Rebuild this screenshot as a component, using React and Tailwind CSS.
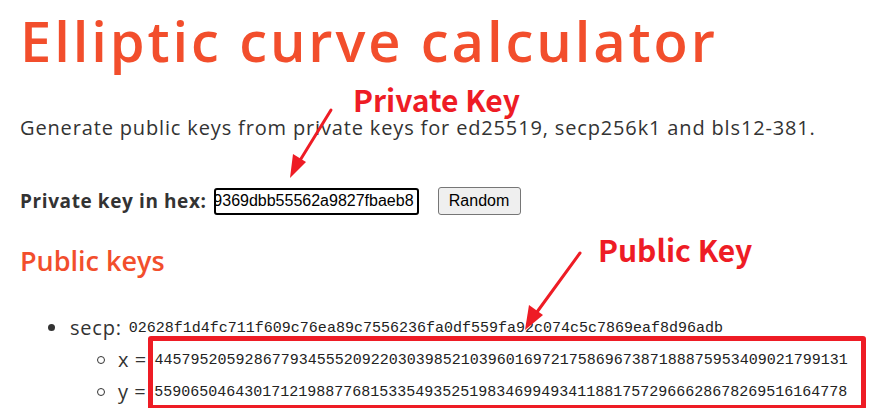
export default function App() {
  const sans = { fontFamily: '"Open Sans", Lato, sans-serif' };
  const mono = { fontFamily: '"Liberation Mono", monospace' };
  const arial = { fontFamily: '"Liberation Sans", Arial, sans-serif' };
  return (
    <div className="relative w-[877px] h-[408px] overflow-hidden bg-white text-[#333]" style={sans}>
      <div className="pl-[20px] pt-[4px]">
        <h1 className="text-[56px] leading-[72px] font-semibold text-[#f24e2c] tracking-[2.9px]">Elliptic curve calculator</h1>
        <p className="mt-[38px] text-[20px] leading-[28px] text-[#333] tracking-[0.85px]">
          Generate public keys from private keys for ed25519, secp256k1 and bls12-381.
        </p>
        <div className="mt-[45px] flex items-center">
          <span className="text-[19px] font-bold text-[#333] tracking-[0.6px]">Private key in hex:</span>
          <div className="ml-[7px] w-[205px] h-[27px] border-2 border-black rounded-[3px] overflow-hidden flex items-center justify-end pr-[3px]">
            <span className="whitespace-nowrap text-[16px] text-black" style={arial}>
              a8f2c1e4d7b0f9369dbb55562a9827fbaeb8
            </span>
          </div>
          <button className="ml-[19px] w-[83px] h-[28px] bg-[#efefef] border border-[#767676] rounded-[3px] text-[16px] text-black" style={arial}>
            Random
          </button>
        </div>
        <h2 className="mt-[27px] text-[27px] leading-[36px] font-semibold text-[#f24e2c]">Public keys</h2>
        <ul className="mt-[33px] ml-[28px]">
          <li className="flex items-center h-[32px]">
            <span className="w-[7px] h-[7px] rounded-full bg-[#333] mr-[15px]"></span>
            <span className="text-[20px] tracking-[0.8px]">secp:</span>
            <span className="ml-[7px] mt-[3px] text-[15px] text-[#222]" style={mono}>
              02628f1d4fc711f609c76ea89c7556236fa0df559fa92c074c5c7869eaf8d96adb
            </span>
          </li>
          <li className="ml-[49px] flex items-center h-[32px]">
            <span className="w-[8px] h-[8px] rounded-full border border-[#333] mr-[13px]"></span>
            <span className="text-[20px] tracking-[0.5px]">x =</span>
            <span className="ml-[8px] mt-[3px] text-[15px] text-[#222]" style={mono}>
              44579520592867793455520922030398521039601697217586967387188875953409021799131
            </span>
          </li>
          <li className="ml-[49px] flex items-center h-[32px]">
            <span className="w-[8px] h-[8px] rounded-full border border-[#333] mr-[13px]"></span>
            <span className="text-[20px] tracking-[0.5px]">y =</span>
            <span className="ml-[8px] mt-[3px] text-[15px] text-[#222]" style={mono}>
              55906504643017121988776815335493525198346994934118817572966628678269516164778
            </span>
          </li>
        </ul>
      </div>

      {/* annotation: red box */}
      <div className="absolute left-[148px] top-[336px] w-[718px] h-[74px] border-[5px] border-[#ee1c25] rounded-[3px]"></div>

      {/* annotation labels */}
      <div className="absolute left-[353px] top-[84px] text-[30px] font-bold text-[#ee1c25] leading-none" style={{ fontFamily: '"Noto Sans CJK SC", "Noto Sans", sans-serif' }}>Private Key</div>
      <div className="absolute left-[598px] top-[234px] text-[30px] font-bold text-[#ee1c25] leading-none" style={{ fontFamily: '"Noto Sans CJK SC", "Noto Sans", sans-serif' }}>Public Key</div>

      {/* arrows */}
      <svg className="absolute left-0 top-0 pointer-events-none" width="877" height="408" viewBox="0 0 877 408">
        <line x1="331" y1="110" x2="299" y2="162" stroke="#ee1c25" strokeWidth="3" strokeLinecap="round" />
        <polygon points="290,178 293,154 306,162" fill="#ee1c25" />
        <line x1="580" y1="253" x2="537" y2="312" stroke="#ee1c25" strokeWidth="3" strokeLinecap="round" />
        <polygon points="525,330 529,305 543,315" fill="#ee1c25" />
      </svg>
    </div>
  );
}
